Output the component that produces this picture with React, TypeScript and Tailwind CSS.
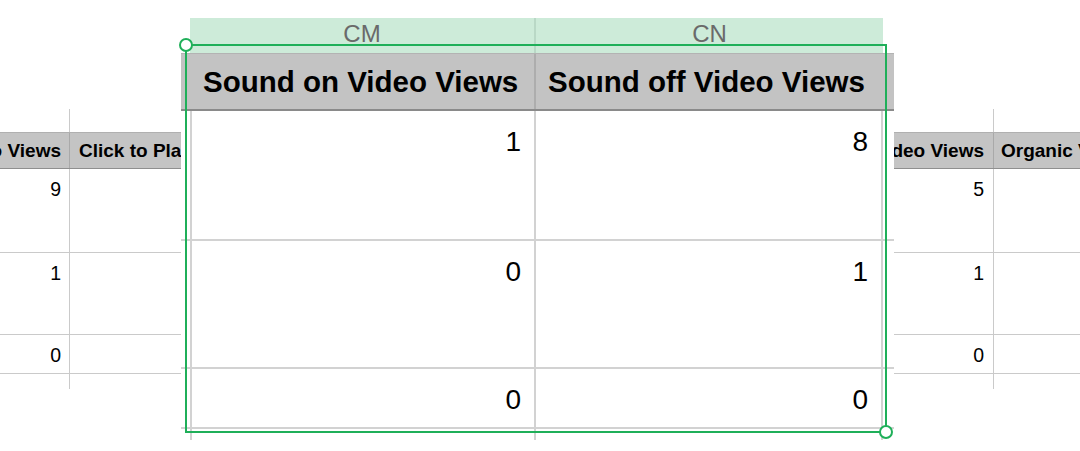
export default function App() {
  const bgCell = "h-full overflow-hidden";
  return (
    <div className="relative w-[1080px] h-[451px] overflow-hidden bg-white font-['Liberation_Sans',Arial,sans-serif] text-black">
      {/* background spreadsheet */}
      <div className="pt-[109px] flex flex-col">
        {/* top stub */}
        <div className="flex h-[23px]">
          <div className={`w-[70px] border-r border-[#cacaca] ${bgCell}`} />
          <div className="w-[111px]" />
          <div className="w-[713px]" />
          <div className={`w-[100px] border-r border-[#cacaca] ${bgCell}`} />
          <div className="w-[86px]" />
        </div>
        {/* header */}
        <div className="flex h-[37px] bg-[#c4c4c4] border-t border-b border-t-[#b0b0b0] border-b-[#8f8f8f] text-[19px] font-bold leading-none">
          <div className="w-[70px] border-r border-[#a9a9a9] overflow-hidden flex items-center justify-end pr-[8px] whitespace-nowrap">
            <span>Video Views</span>
          </div>
          <div className="w-[111px] overflow-hidden flex items-center pl-[9px] whitespace-nowrap">
            <span>Click to Play Video Views</span>
          </div>
          <div className="w-[713px]" />
          <div className="w-[100px] border-r border-[#a9a9a9] overflow-hidden flex items-center justify-end pr-[9px] whitespace-nowrap">
            <span>Paid Video Views</span>
          </div>
          <div className="w-[86px] overflow-hidden flex items-center pl-[7px] whitespace-nowrap">
            <span>Organic Video Views</span>
          </div>
        </div>
        {[
          { h: "h-[84px]", a: "9", b: "5" },
          { h: "h-[82px]", a: "1", b: "1" },
          { h: "h-[39px]", a: "0", b: "0" },
        ].map((r, i) => (
          <div key={i} className={`flex ${r.h} border-b border-[#cacaca] text-[19.5px] leading-none`}>
            <div className="w-[70px] border-r border-[#cacaca] flex justify-end pt-[11px] pr-[8px]">{r.a}</div>
            <div className="w-[111px]" />
            <div className="w-[713px]" />
            <div className="w-[100px] border-r border-[#cacaca] flex justify-end pt-[11px] pr-[9px]">{r.b}</div>
            <div className="w-[86px]" />
          </div>
        ))}
        {/* bottom stub */}
        <div className="flex h-[15px]">
          <div className="w-[70px] border-r border-[#cacaca]" />
          <div className="w-[111px]" />
          <div className="w-[713px]" />
          <div className="w-[100px] border-r border-[#cacaca]" />
          <div className="w-[86px]" />
        </div>
      </div>

      {/* magnified overlay */}
      <div className="absolute left-[181px] top-[18px] w-[713px] bg-white flex flex-col">
        {/* column letters */}
        <div className="flex h-[35px] text-[24px] leading-none text-[#6a6a6a]">
          <div className="w-[9px]" />
          <div className="w-[346px] bg-[#cdebd9] border-r-2 border-[#b9d8c6] flex justify-center pt-[4px]">CM</div>
          <div className="w-[347px] bg-[#cdebd9] flex justify-center pt-[4px]">CN</div>
          <div className="w-[11px]" />
        </div>
        {/* header */}
        <div className="flex h-[58px] bg-[#c3c3c3] border-t border-t-[#b3b3b3] border-b-2 border-b-[#8a8a8a] text-[29.5px] font-bold leading-none whitespace-nowrap">
          <div className="w-[9px]" />
          <div className="w-[346px] border-r-2 border-[#adadad] flex items-center pl-[13px]">Sound on Video Views</div>
          <div className="w-[347px] flex items-center pl-[12px]">Sound off Video Views</div>
          <div className="w-[11px]" />
        </div>
        {[
          { h: "h-[130px]", a: "1", b: "8" },
          { h: "h-[128px]", a: "0", b: "1" },
          { h: "h-[60px]", a: "0", b: "0" },
        ].map((r, i) => (
          <div key={i} className={`flex ${r.h} border-b-2 border-[#d2d2d2] text-[28px] leading-none`}>
            <div className="w-[9px]" />
            <div className="w-[346px] border-l-2 border-r-2 border-[#d2d2d2] flex justify-end pt-[17px] pr-[13px]">{r.a}</div>
            <div className="w-[347px] border-r-2 border-[#d2d2d2] flex justify-end pt-[17px] pr-[13px]">{r.b}</div>
            <div className="w-[11px]" />
          </div>
        ))}
        <div className="flex h-[11px]">
          <div className="w-[9px]" />
          <div className="w-[346px] border-l-2 border-r-2 border-[#d2d2d2]" />
          <div className="w-[347px] border-r-2 border-[#d2d2d2]" />
          <div className="w-[11px]" />
        </div>
      </div>

      {/* selection */}
      <div className="absolute left-[185px] top-[44px] w-[702px] h-[389px] border-2 border-[#1faf59]" />
      <div className="absolute left-[179px] top-[38px] w-[14px] h-[14px] rounded-full bg-white border-2 border-[#1faf59]" />
      <div className="absolute left-[879px] top-[425px] w-[14px] h-[14px] rounded-full bg-white border-2 border-[#1faf59]" />
    </div>
  );
}
